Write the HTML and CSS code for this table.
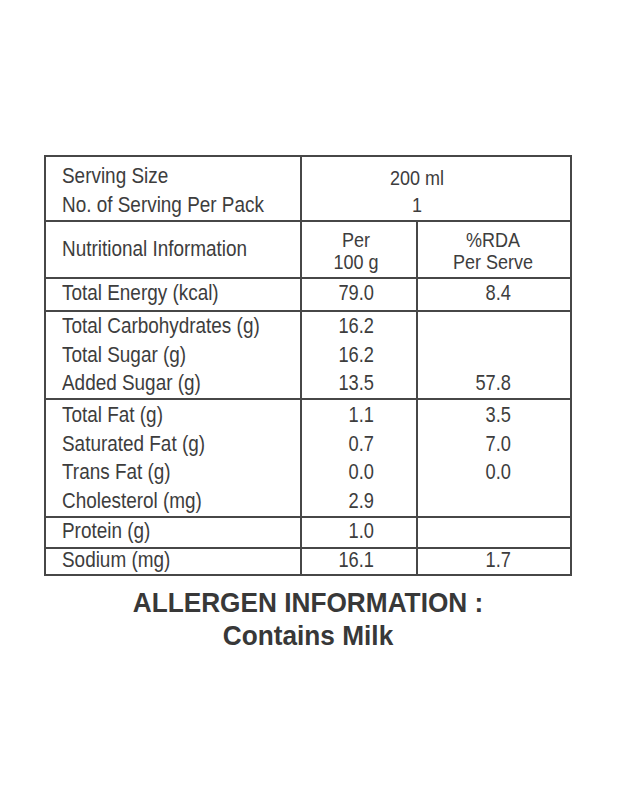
FILE: index.html
```html
<!DOCTYPE html>
<html lang="en">
<head>
<meta charset="utf-8">
<title>Nutritional Information</title>
<link rel="stylesheet" href="styles.css">
</head>
<body>
<main class="wrap">
  <section class="facts">
    <div class="row r1">
      <div class="cell left pad-r1">
        <div class="ln">Serving Size</div>
        <div class="ln">No. of Serving Per Pack</div>
      </div>
      <div class="cell ctr span2 serve">
        <div class="ln">200 ml</div>
        <div class="ln">1</div>
      </div>
    </div>
    <div class="row r2">
      <div class="cell left mid">
        <div class="ln">Nutritional Information</div>
      </div>
      <div class="cell ctr head head-a">
        <div class="ln">Per</div>
        <div class="ln">100 g</div>
      </div>
      <div class="cell ctr head head-b">
        <div class="ln">%RDA</div>
        <div class="ln">Per Serve</div>
      </div>
    </div>
    <div class="row r3">
      <div class="cell left"><div class="ln">Total Energy (kcal)</div></div>
      <div class="cell num c2"><div class="ln">79.0</div></div>
      <div class="cell num c3"><div class="ln">8.4</div></div>
    </div>
    <div class="row r4">
      <div class="cell left">
        <div class="ln">Total Carbohydrates (g)</div>
        <div class="ln">Total Sugar (g)</div>
        <div class="ln">Added Sugar (g)</div>
      </div>
      <div class="cell num c2">
        <div class="ln">16.2</div>
        <div class="ln">16.2</div>
        <div class="ln">13.5</div>
      </div>
      <div class="cell num c3">
        <div class="ln">&nbsp;</div>
        <div class="ln">&nbsp;</div>
        <div class="ln">57.8</div>
      </div>
    </div>
    <div class="row r5">
      <div class="cell left">
        <div class="ln">Total Fat (g)</div>
        <div class="ln">Saturated Fat (g)</div>
        <div class="ln">Trans Fat (g)</div>
        <div class="ln">Cholesterol (mg)</div>
      </div>
      <div class="cell num c2">
        <div class="ln">1.1</div>
        <div class="ln">0.7</div>
        <div class="ln">0.0</div>
        <div class="ln">2.9</div>
      </div>
      <div class="cell num c3">
        <div class="ln">3.5</div>
        <div class="ln">7.0</div>
        <div class="ln">0.0</div>
      </div>
    </div>
    <div class="row r6">
      <div class="cell left"><div class="ln">Protein (g)</div></div>
      <div class="cell num c2"><div class="ln">1.0</div></div>
      <div class="cell num c3"></div>
    </div>
    <div class="row r7">
      <div class="cell left"><div class="ln">Sodium (mg)</div></div>
      <div class="cell num c2"><div class="ln">16.1</div></div>
      <div class="cell num c3"><div class="ln">1.7</div></div>
    </div>
  </section>
  <section class="allergen">
    <div class="al-ln">ALLERGEN INFORMATION :</div>
    <div class="al-ln">Contains Milk</div>
  </section>
</main>
</body>
</html>
```

FILE: styles.css
```css
html, body {
  margin: 0;
  padding: 0;
  background: #ffffff;
}

body {
  font-family: "Liberation Sans", Arial, sans-serif;
  color: #3d3d3d;
}

.wrap {
  width: 528px;
  padding: 155px 0 0 44px;
}

.facts {
  box-sizing: border-box;
  width: 528px;
  border: 2px solid #474747;
}

.row {
  box-sizing: border-box;
  display: grid;
  grid-template-columns: 254px 116px 154px;
  border-top: 2px solid #474747;
  font-size: 22px;
  line-height: 28.6px;
}

.r1 { border-top: 0; height: 63px; }
.r2 { height: 57px; }
.r3 { height: 33px; }
.r4 { height: 88px; }
.r5 { height: 118px; }
.r6 { height: 31px; line-height: 26px; }
.r7 { height: 27px; line-height: 21px; }

.cell {
  box-sizing: border-box;
  min-width: 0;
}

.cell + .cell {
  border-left: 2px solid #474747;
}

.span2 {
  grid-column: 2 / span 2;
}

.ln {
  white-space: nowrap;
  transform: scaleX(0.86);
}

.left {
  padding-left: 16px;
}

.left .ln {
  transform-origin: left center;
}

.ctr .ln {
  text-align: center;
  transform-origin: center center;
}

.num .ln {
  text-align: right;
  transform-origin: right center;
  transform: scaleX(0.83);
}

.c2 { padding-right: 42px; }
.c3 { padding-right: 59px; }

.r5 .cell { padding-top: 1px; }

.pad-r1 {
  padding-top: 3.5px;
  line-height: 29px;
}

.serve {
  padding-top: 8px;
  padding-right: 38px;
  font-size: 20px;
  line-height: 26.5px;
}

.serve .ln {
  transform: scaleX(0.9);
}

.mid {
  display: flex;
  flex-direction: column;
  justify-content: center;
}

.head {
  padding-top: 7px;
  font-size: 20px;
  line-height: 22.4px;
}

.head .ln {
  transform: scaleX(0.9);
}

.head-a { padding-right: 6px; }
.head-b { padding-right: 2px; }

.allergen {
  margin-top: 10px;
  font-weight: bold;
  font-size: 28.5px;
  line-height: 32.5px;
  color: #383838;
  text-align: center;
}

.al-ln {
  white-space: nowrap;
  transform: scaleX(0.92);
  transform-origin: center center;
}
```
